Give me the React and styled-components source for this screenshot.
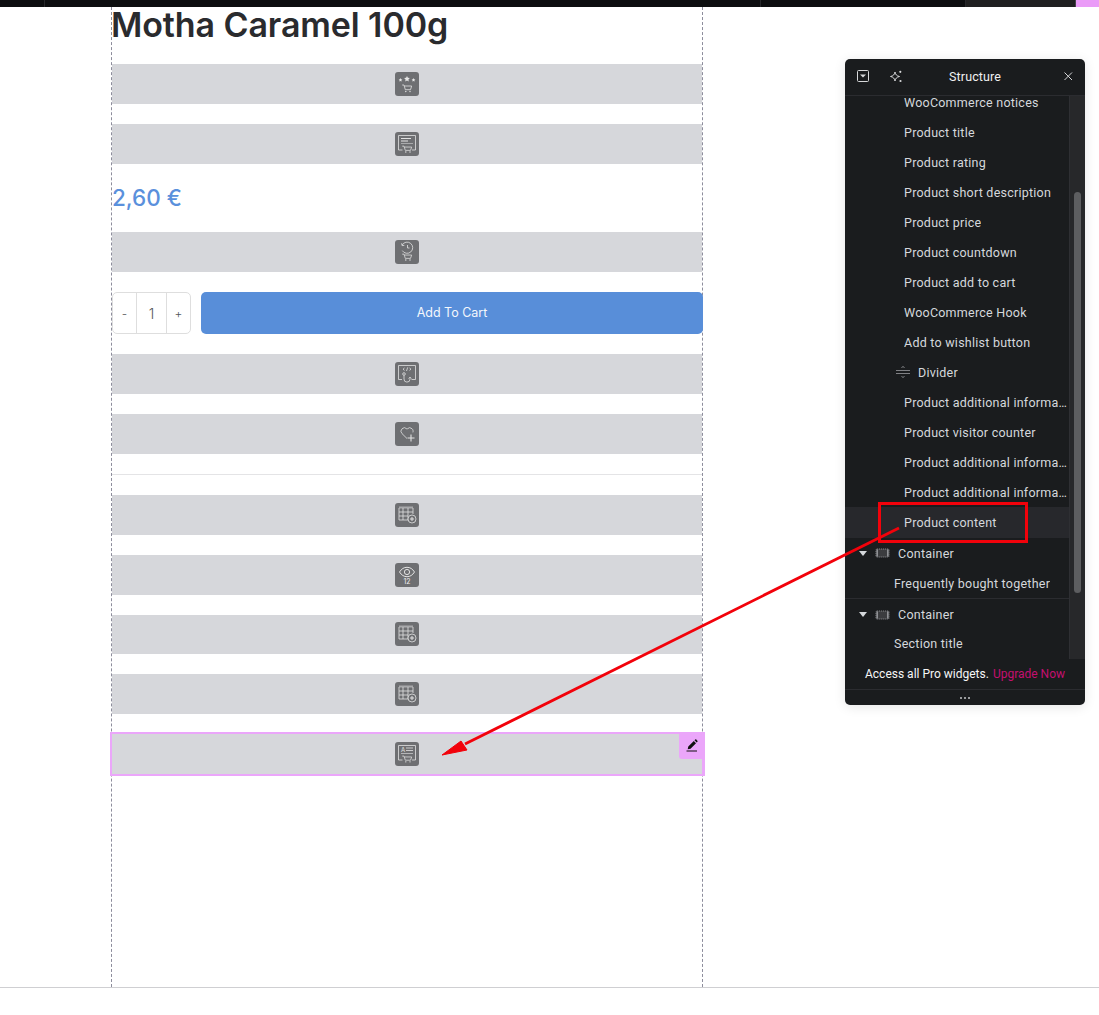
import styled, { createGlobalStyle } from 'styled-components';

const GlobalStyle = createGlobalStyle`
  html, body { margin: 0; padding: 0; background: #fff; }
  body { font-family: "Inter", "Liberation Sans", sans-serif; }
  * { box-sizing: border-box; }
`;

const Page = styled.div`
  position: relative;
  width: 1099px;
  height: 1015px;
  overflow: hidden;
`;

const TopBar = styled.div`
  display: flex;
  height: 7px;
  background: #0c0d0f;
`;
const TopSegment = styled.div`
  width: ${p => p.$w}px;
  flex: ${p => (p.$w ? 'none' : 1)};
  background: ${p => p.$bg || 'transparent'};
  border-left: 1px solid ${p => p.$line || '#26272a'};
`;

const Canvas = styled.main`
  height: 981px;
  border-bottom: 1px solid #cfcfd2;
  padding-left: 111px;
`;
const Column = styled.div`
  width: 592px;
  height: 980px;
  border-left: 1px dashed #8d8d9c;
  border-right: 1px dashed #8d8d9c;
  display: flex;
  flex-direction: column;
  gap: 20px;
`;

const Title = styled.h1`
  margin: 0 0 0 -1px;
  height: 37px;
  font-size: 34px;
  line-height: 36px;
  font-weight: 600;
  letter-spacing: -0.1px;
  color: #2a2b2e;
  white-space: nowrap;
`;
const Price = styled.div`
  height: 28px;
  font-size: 22.5px;
  line-height: 28px;
  font-weight: 500;
  color: #5a90dc;
`;

const Placeholder = styled.div`
  position: relative;
  flex: none;
  height: ${p => p.$h || 40}px;
  background: #d6d7db;
  display: flex;
  align-items: center;
  justify-content: center;
  box-shadow: ${p => (p.$selected ? '0 0 0 2px #eba6fa, 1px 0 0 2px #eba6fa' : 'none')};
`;
const EditTab = styled.div`
  position: absolute;
  top: -2px;
  right: -3px;
  width: 26px;
  height: 27px;
  background: #eba6fa;
  border-bottom-left-radius: 3px;
  display: flex;
  align-items: center;
  justify-content: center;
`;
const WidgetIcon = styled.svg`
  display: block;
  width: 24px;
  height: 24px;
  border-radius: 3px;
  background: #6e6f72;
  fill: none;
  stroke: #e2e2e2;
  stroke-width: 0.8;
`;

const CartRow = styled.div`
  flex: none;
  height: 42px;
  display: flex;
  gap: 10px;
`;
const Quantity = styled.div`
  width: 79px;
  display: grid;
  grid-template-columns: 23px 31px 23px;
  border: 1px solid #dedede;
  border-radius: 5px;
`;
const QtyCell = styled.span`
  display: flex;
  align-items: center;
  justify-content: center;
  font-size: ${p => (p.$value ? 14 : 12)}px;
  font-weight: 300;
  color: #55565a;
  border-left: ${p => (p.$value ? '1px solid #dedede' : 'none')};
  border-right: ${p => (p.$value ? '1px solid #dedede' : 'none')};
`;
const AddButton = styled.button`
  flex: 1;
  margin-right: -1px;
  padding: 0 0 2px;
  border: 0;
  border-radius: 5px;
  background: #588ed9;
  color: #f4f7fc;
  font-family: inherit;
  font-size: 12.5px;
  font-weight: 400;
`;
const Rule = styled.hr`
  flex: none;
  width: 100%;
  height: 1px;
  margin: 0;
  border: 0;
  background: #e4e4e6;
`;

const Panel = styled.aside`
  position: absolute;
  left: 845px;
  top: 59px;
  width: 240px;
  height: 646px;
  background: #1a1c1e;
  border-radius: 5px;
  box-shadow: 0 2px 12px rgba(0, 0, 0, 0.1);
  display: flex;
  flex-direction: column;
  overflow: hidden;
  font-family: "Roboto", "Liberation Sans", sans-serif;
`;
const PanelHeader = styled.header`
  flex: none;
  height: 37px;
  display: flex;
  align-items: center;
  padding: 0 10px 2px 11px;
  gap: 19px;
  border-bottom: 1px solid #2b2c30;
`;
const PanelTitle = styled.div`
  flex: 1;
  text-align: center;
  color: #f0f0f1;
  font-size: 12.5px;
  letter-spacing: 0.1px;
  padding-right: 14px;
`;
const HeaderIcon = styled.svg`
  flex: none;
  width: 14px;
  height: 14px;
  fill: none;
  stroke: #d8d9db;
  stroke-width: 1;
`;
const PanelBody = styled.div`
  flex: 1;
  min-height: 0;
  display: flex;
  overflow: hidden;
`;
const Tree = styled.ul`
  flex: 1;
  min-width: 0;
  list-style: none;
  margin: -9px 0 0;
  padding: 0;
  border-right: 1px solid #2e2f33;
`;
const TreeItem = styled.li`
  height: ${p => p.$h || 30}px;
  display: flex;
  align-items: center;
  padding-left: ${p => p.$indent}px;
  padding-right: 2px;
  gap: 8px;
  color: #d5d8dc;
  font-size: 12.5px;
  letter-spacing: 0.24px;
  white-space: nowrap;
  background: ${p => (p.$active ? '#27282c' : 'transparent')};
  border-bottom: ${p => (p.$split ? '1px solid #2b2c30' : 'none')};
`;
const ItemLabel = styled.span`
  overflow: hidden;
  text-overflow: ellipsis;
`;
const Caret = styled.span`
  flex: none;
  width: 0;
  height: 0;
  border-left: 4.5px solid transparent;
  border-right: 4.5px solid transparent;
  border-top: 5px solid #d5d8dc;
`;
const TreeIcon = styled.svg`
  flex: none;
  width: ${p => p.$w || 14}px;
  height: 14px;
  fill: none;
  stroke: #9a9ca0;
  stroke-width: 0.8;
`;
const ScrollTrack = styled.div`
  flex: none;
  width: 15px;
  background: #27282a;
  padding: 96px 4px 0;
`;
const ScrollThumb = styled.div`
  height: 401px;
  border-radius: 4px;
  background: #5d5e60;
`;
const PanelPromo = styled.div`
  flex: none;
  height: 31px;
  display: flex;
  align-items: center;
  padding-left: 20px;
  gap: 4px;
  font-size: 12px;
  color: #f6f6f7;
  border-bottom: 1px solid #2b2c30;
`;
const UpgradeLink = styled.a`
  color: #c40f6f;
`;
const PanelHandle = styled.div`
  flex: none;
  height: 15px;
  display: flex;
  align-items: center;
  justify-content: center;
  gap: 2px;
`;
const HandleDot = styled.i`
  width: 2px;
  height: 2px;
  border-radius: 50%;
  background: #c5c6c8;
`;

const Annotation = styled.svg`
  position: absolute;
  inset: 0;
  width: 1099px;
  height: 1015px;
  pointer-events: none;
`;

const cart = (
  <g>
    <path d="M7.200 13.500h1.800l1.300 4.700h5.200l1.200-3.700H9.300" />
    <circle cx="10.800" cy="20" r=".7" fill="#e2e2e2" stroke="none" />
    <circle cx="15" cy="20" r=".7" fill="#e2e2e2" stroke="none" />
  </g>
);
const star = (x, y, r) => {
  const pts = [];
  for (let i = 0; i < 10; i++) {
    const a = -Math.PI / 2 + (i * Math.PI) / 5;
    const d = i % 2 ? r * 0.5 : r;
    pts.push(`${(x + d * Math.cos(a)).toFixed(2)},${(y + d * Math.sin(a)).toFixed(2)}`);
  }
  return <polygon points={pts.join(' ')} fill="#e6e6e6" stroke="none" />;
};

const glyphs = {
  rating: (
    <>
      {star(5.500, 8, 2)}
      {star(12, 7, 3)}
      {star(18.500, 8, 2)}
      <g transform="translate(0 -.5)">{cart}</g>
    </>
  ),
  description: (
    <>
      <path d="M7.500 18H3.500V3.500h17V18H17" />
      <path d="M6 6.500h10M6 9h7" strokeWidth="1" />
      <path d="M6 11.500h12" stroke="#a9aaac" strokeWidth="1" />
      <g transform="translate(0 2) scale(1 .9)">{cart}</g>
    </>
  ),
  countdown: (
    <>
      <path d="M7.200 5a5.600 5.600 0 1 1 .1 5.600" />
      <path d="M6.700 3.200 7 5.600l2.300-.2" />
      <path d="M12.500 5v3h2" />
      <g transform="translate(0 2) scale(1 .9)">{cart}</g>
    </>
  ),
  hook: (
    <>
      <path d="M7 17.500H3.500V3.500h17v14H16.500" />
      <path d="M9.500 6 8 7.200l1.500 1.200M14.500 6l1.500 1.200-1.500 1.200M12.700 5.400l-1.200 3.600" />
      <circle cx="9" cy="12" r="1.300" />
      <path d="M9 13.300v3.700a3 3 0 0 0 6 .2V15.500" />
      <path d="M13.600 16.500l1.400-1.400 1.400 1.400" />
    </>
  ),
  wishlist: (
    <>
      <path d="M12 16.500 7 11.600a3.400 3.400 0 0 1 0-4.800 3.400 3.400 0 0 1 4.800 0l.2.3.3-.3a3.400 3.400 0 0 1 4.800 0c1 1 1.200 2.300.8 3.600" />
      <path d="M16 12.500v7M12.500 16h7" strokeWidth="1.100" />
    </>
  ),
  table: (
    <>
      <path d="M4 4.500h14" strokeWidth="2.200" stroke="#a9aaac" />
      <path d="M4 5v12h9M18 5v6M4 9h14M4 13h9M8 5v12M13 5v12" />
      <circle cx="17" cy="16" r="4" fill="#6e6f72" />
      <path d="M17 14v4M15 16h4" strokeWidth="1" />
    </>
  ),
  counter: (
    <>
      <path d="M4.500 9C6.500 5.800 9 4.300 12 4.300s5.500 1.500 7.500 4.700c-2 3.200-4.500 4.700-7.500 4.700S6.500 12.200 4.500 9Z" strokeWidth="1" />
      <circle cx="12" cy="9" r="2.600" strokeWidth="1" />
      <text x="12" y="21" textAnchor="middle" fontSize="7" fontFamily="Inter, sans-serif" fill="#eeeeee" stroke="none">12</text>
    </>
  ),
  content: (
    <>
      <path d="M7.500 18H3.500V3.500h17V18H17" />
      <text x="6" y="9.500" fontSize="6" fontFamily="Inter, sans-serif" fill="#e2e2e2" stroke="none">A</text>
      <path d="M11 6h7M11 8.500h7" />
      <path d="M6 11.500h12" stroke="#b5b6b8" strokeWidth="1.200" />
      <g transform="translate(0 2.200) scale(1 .88)">{cart}</g>
    </>
  ),
};

function Widget({ icon, h, selected }) {
  return (
    <Placeholder $h={h} $selected={selected}>
      <WidgetIcon viewBox="0 0 24 24">{glyphs[icon]}</WidgetIcon>
      {selected && (
        <EditTab>
          <svg width="12" height="13" viewBox="0 0 12 13" fill="#111">
            <path d="M2.300 7.500 7.800 2l2.200 2.200-5.500 5.500-2.800.6zM8.500 1.300l.7-.7a.8.800 0 0 1 1.100 0l1.100 1.100a.8.800 0 0 1 0 1.100l-.7.700z" />
            <path d="M.5 11.500h10.500v1H.5z" />
          </svg>
        </EditTab>
      )}
    </Placeholder>
  );
}

const ContainerIcon = () => (
  <TreeIcon $w={15} viewBox="0 0 14 14">
    <rect x=".5" y="3" width="13" height="8" rx="1" fill="#3b3c3f" strokeDasharray="1.200 .8" />
    <path d="M1 3.500h1.500v7H1zM11.500 3.500H13v7h-1.500z" fill="#8f9195" stroke="none" />
  </TreeIcon>
);

const DividerIcon = () => (
  <TreeIcon viewBox="0 0 14 14">
    <path d="M0 5.500h14M0 8.500h14" />
    <path d="M5.500 3 7 1.300 8.500 3M5.500 11 7 12.700 8.500 11" />
  </TreeIcon>
);

const widgetLabels = [
  'WooCommerce notices',
  'Product title',
  'Product rating',
  'Product short description',
  'Product price',
  'Product countdown',
  'Product add to cart',
  'WooCommerce Hook',
  'Add to wishlist button',
];
const lowerLabels = [
  'Product additional information',
  'Product visitor counter',
  'Product additional information',
  'Product additional information',
];

export default function App() {
  return (
    <Page>
      <GlobalStyle />
      <TopBar>
        <TopSegment $w={44} $line="#0c0d0f" />
        <TopSegment $w={716} />
        <TopSegment $w={205} />
        <TopSegment $w={110} $bg="#1f1f20" />
        <TopSegment $bg="#ea9bf7" $line="#46454a" />
      </TopBar>

      <Canvas>
        <Column>
          <Title>Motha Caramel 100g</Title>
          <Widget icon="rating" />
          <Widget icon="description" />
          <Price>2,60 €</Price>
          <Widget icon="countdown" />
          <CartRow>
            <Quantity>
              <QtyCell>-</QtyCell>
              <QtyCell $value>1</QtyCell>
              <QtyCell>+</QtyCell>
            </Quantity>
            <AddButton>Add To Cart</AddButton>
          </CartRow>
          <Widget icon="hook" />
          <Widget icon="wishlist" />
          <Rule />
          <Widget icon="table" h={39.75} />
          <Widget icon="counter" h={39.75} />
          <Widget icon="table" h={39.75} />
          <Widget icon="table" h={39.75} />
          <Widget icon="content" h={39.75} selected />
        </Column>
      </Canvas>

      <Panel>
        <PanelHeader>
          <HeaderIcon viewBox="0 0 14 14">
            <rect x="1.500" y="1.500" width="11" height="11" rx="1" />
            <path d="M4 5.500h6L7 8.500z" fill="#d8d9db" stroke="none" />
          </HeaderIcon>
          <HeaderIcon viewBox="0 0 14 14">
            <path d="M6 3c.5 2.700 1.800 4 4.500 4.500C7.800 8 6.500 9.300 6 12 5.500 9.300 4.200 8 1.500 7.500 4.200 7 5.500 5.700 6 3Z" />
            <circle cx="11.300" cy="2.800" r="1.100" fill="#d8d9db" stroke="none" />
            <circle cx="11.500" cy="12" r="1.100" fill="#d8d9db" stroke="none" />
          </HeaderIcon>
          <PanelTitle>Structure</PanelTitle>
          <HeaderIcon viewBox="0 0 14 14">
            <path d="m3.500 3.500 7.500 7.500m0-7.500-7.500 7.500" />
          </HeaderIcon>
        </PanelHeader>
        <PanelBody>
          <Tree>
            {widgetLabels.map(label => (
              <TreeItem key={label} $indent={59}>
                <ItemLabel>{label}</ItemLabel>
              </TreeItem>
            ))}
            <TreeItem $indent={51}>
              <DividerIcon />
              <ItemLabel>Divider</ItemLabel>
            </TreeItem>
            {lowerLabels.map((label, i) => (
              <TreeItem key={i} $indent={59}>
                <ItemLabel>{label}</ItemLabel>
              </TreeItem>
            ))}
            <TreeItem $indent={59} $h={31} $active>
              <ItemLabel>Product content</ItemLabel>
            </TreeItem>
            <TreeItem $indent={14}>
              <Caret />
              <ContainerIcon />
              <ItemLabel>Container</ItemLabel>
            </TreeItem>
            <TreeItem $indent={49} $h={31} $split>
              <ItemLabel>Frequently bought together</ItemLabel>
            </TreeItem>
            <TreeItem $indent={14} $h={31}>
              <Caret />
              <ContainerIcon />
              <ItemLabel>Container</ItemLabel>
            </TreeItem>
            <TreeItem $indent={49} $h={26}>
              <ItemLabel>Section title</ItemLabel>
            </TreeItem>
          </Tree>
          <ScrollTrack>
            <ScrollThumb />
          </ScrollTrack>
        </PanelBody>
        <PanelPromo>
          Access all Pro widgets.
          <UpgradeLink>Upgrade Now</UpgradeLink>
        </PanelPromo>
        <PanelHandle>
          <HandleDot />
          <HandleDot />
          <HandleDot />
        </PanelHandle>
      </Panel>

      <Annotation viewBox="0 0 1099 1015">
        <rect x="879.500" y="503.500" width="147" height="38" fill="none" stroke="#f2020b" strokeWidth="3" />
        <path d="M899 528 465 744" stroke="#f2020b" strokeWidth="2.800" fill="none" />
        <path d="M442 755 461 741 467 750Z" fill="#f2020b" stroke="#f2020b" strokeWidth="1" />
      </Annotation>
    </Page>
  );
}
